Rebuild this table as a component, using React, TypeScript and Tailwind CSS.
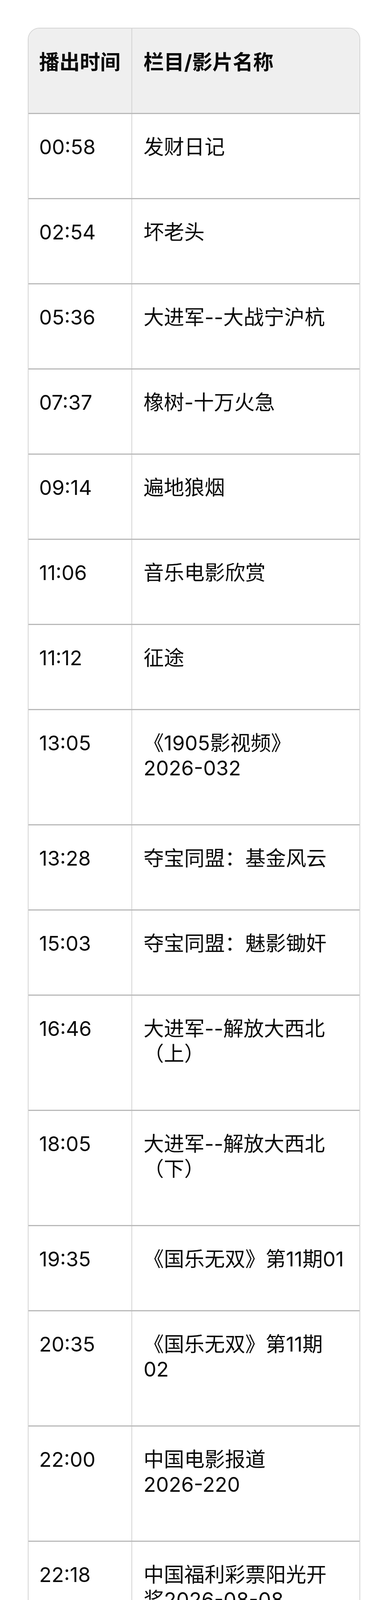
const rows: { time: string; lines: string[] }[] = [
  { time: "00:58", lines: ["发财日记"] },
  { time: "02:54", lines: ["坏老头"] },
  { time: "05:36", lines: ["大进军--大战宁沪杭"] },
  { time: "07:37", lines: ["橡树-十万火急"] },
  { time: "09:14", lines: ["遍地狼烟"] },
  { time: "11:06", lines: ["音乐电影欣赏"] },
  { time: "11:12", lines: ["征途"] },
  { time: "13:05", lines: ["《1905影视频》", "2026-032"] },
  { time: "13:28", lines: ["夺宝同盟：基金风云"] },
  { time: "15:03", lines: ["夺宝同盟：魅影锄奸"] },
  { time: "16:46", lines: ["大进军--解放大西北", "（上）"] },
  { time: "18:05", lines: ["大进军--解放大西北", "（下）"] },
  { time: "19:35", lines: ["《国乐无双》第11期01"] },
  { time: "20:35", lines: ["《国乐无双》第11期", "02"] },
  { time: "22:00", lines: ["中国电影报道", "2026-220"] },
  { time: "22:18", lines: ["中国福利彩票阳光开", "奖2026-08-08"] },
  { time: "22:24", lines: ["佳片有约周六版", "2026-032"] },
  { time: "22:33", lines: ["金刚：骷髅岛（上）"] },
  { time: "23:00", lines: ["中国体育彩票阳光开", "奖2026-08-08"] },
  { time: "23:01", lines: ["金刚：骷髅岛（下）"] },
];

const ScheduleRow = ({
  time,
  lines,
  last,
}: {
  time: string;
  lines: string[];
  last: boolean;
}) => {
  const height = lines.length > 1 ? "h-[295px]" : last ? "h-[216px]" : "h-[218px]";
  return (
    <div className={`grid grid-cols-[265px_1fr] border-t-[3px] border-[#b9b9b9] ${height}`}>
      <div className="border-r-2 border-[#d4d4d4] pl-[27px] pt-[53px]">{time}</div>
      <div className="pl-[29px] pt-[53px]">
        {lines.map((line) => (
          <div key={line} className="whitespace-nowrap">
            {line}
          </div>
        ))}
      </div>
    </div>
  );
};

export default function App() {
  return (
    <div className="bg-white pt-[71px] pb-[27px] font-['Inter','Noto_Sans_CJK_SC',sans-serif] text-[52px] leading-[64px] text-[#0a0a0a]">
      <div className="mx-auto w-[850px] overflow-hidden rounded-[30px] border-2 border-[#d4d4d4]">
        <div className="grid h-[216px] grid-cols-[265px_1fr] bg-[#efefef] font-bold">
          <div className="border-r-2 border-[#d4d4d4] pl-[27px] pt-[55px]">播出时间</div>
          <div className="pl-[29px] pt-[55px]">栏目/影片名称</div>
        </div>
        {rows.map((row, i) => (
          <ScheduleRow
            key={row.time}
            time={row.time}
            lines={row.lines}
            last={i === rows.length - 1}
          />
        ))}
      </div>

      {/* faint scroll indicator left over at the bottom of the capture */}
      <div className="ml-[622px] mt-[18px] h-[20px] w-[345px] bg-linear-to-r from-white via-[#ececec] via-75% to-[#505050]" />
    </div>
  );
}
